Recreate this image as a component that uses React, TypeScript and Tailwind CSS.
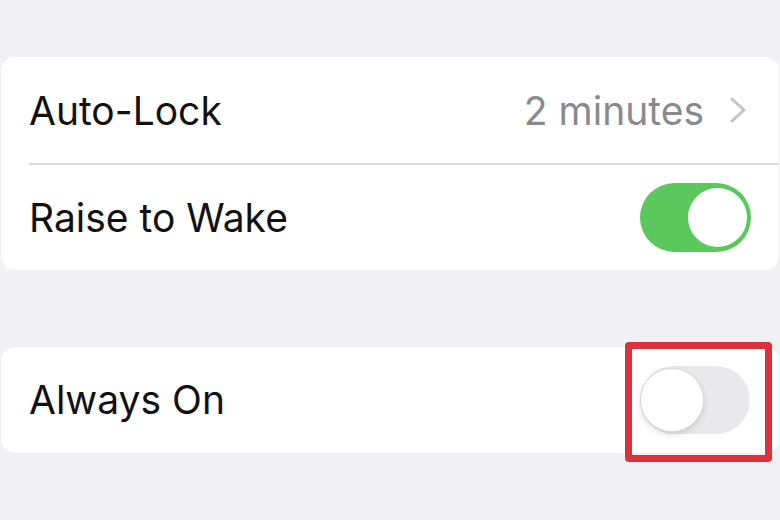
import React from "react";

function Toggle({ on }: { on: boolean }) {
  if (on) {
    return (
      <div className="flex h-[69px] w-[111px] items-center justify-end rounded-full bg-[#5bc85e] p-[1px]">
        <div className="h-[65px] w-[65px] rounded-full border-[3px] border-[#5bc85e] bg-white" />
      </div>
    );
  }
  return (
    <div className="flex h-[68px] w-[110px] items-center justify-start rounded-full bg-[#e9e9eb]">
      <div className="h-[64px] w-[64px] rounded-full border border-[#dcdcdc] bg-white shadow-[0_3px_6px_rgba(0,0,0,0.12)]" />
    </div>
  );
}

export default function App() {
  const font = { fontFamily: "Inter, 'Liberation Sans', sans-serif" };
  return (
    <div className="flex h-[520px] w-[780px] flex-col overflow-hidden bg-[#f0f0f5]" style={font}>
      <div className="h-[57px]" />
      <div className="mx-[1px] flex flex-col rounded-[14px] bg-white">
        <div className="flex h-[106px] items-center pl-[28px] pr-[30px]">
          <span className="flex-1 text-[39px] leading-none text-[#111]">Auto-Lock</span>
          <span className="text-[39px] leading-none text-[#8a8a8e]">2 minutes</span>
          <svg className="ml-[24px]" width="21" height="26" viewBox="0 0 21 26" fill="none">
            <path d="M4 2 L16 13 L4 24" stroke="#c4c4c7" strokeWidth="3" strokeLinecap="round" strokeLinejoin="round" />
          </svg>
        </div>
        <div className="ml-[28px] h-[1.5px] bg-[#dcdce0]" />
        <div className="flex h-[105px] items-center pl-[28px] pr-[28px]">
          <span className="flex-1 text-[39px] leading-none text-[#111]">Raise to Wake</span>
          <Toggle on={true} />
        </div>
      </div>
      <div className="h-[77px]" />
      <div className="relative mx-[1px] rounded-[14px] bg-white">
        <div className="flex h-[106px] items-center pl-[28px] pr-[29px]">
          <span className="flex-1 text-[39px] leading-none text-[#111]">Always On</span>
          <Toggle on={false} />
        </div>
        <div className="absolute left-[624px] top-[-5px] h-[120px] w-[147px] rounded-[4px] border-[7px] border-[#de2f3d]" />
      </div>
    </div>
  );
}
